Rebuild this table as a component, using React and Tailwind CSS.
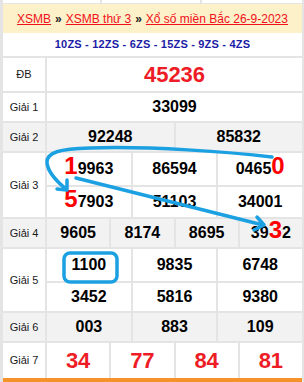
import clsx from 'clsx';

// red oversized digit used inside the Giải 3 / Giải 4 numbers
function Big({ children }) {
  return <span className="text-[24px] leading-[0] text-[#ff0000]">{children}</span>;
}

function Label({ children }) {
  return (
    <div className="w-[44px] shrink-0 flex items-center justify-center border-r-2 border-[#e4e4e4] text-[11px] text-[#1a1a1a]">
      {children}
    </div>
  );
}

function Cells({ items, className, red }) {
  return (
    <div className={clsx('flex flex-1 divide-x-2 divide-[#e4e4e4]', className)}>
      {items.map((n, i) => (
        <div
          key={i}
          className={clsx(
            'flex-1 flex items-center justify-center font-bold leading-none',
            red ? 'text-[22px] text-[#ee1c25]' : 'text-[16px] text-black'
          )}
        >
          {n}
        </div>
      ))}
    </div>
  );
}

function Row({ label, gray, className, children }) {
  return (
    <div className={clsx('flex border-b-2 border-[#e4e4e4]', gray ? 'bg-[#f2f2f2]' : 'bg-white', className)}>
      <Label>{label}</Label>
      <div className="flex-1 flex flex-col">{children}</div>
    </div>
  );
}

export default function App() {
  return (
    <div className="relative w-[304px] h-[382px] overflow-hidden font-['Liberation_Sans',Arial,sans-serif]">
      <div className="w-full h-full bg-white border-l-[3px] border-r-2 border-[#e4e4e4] flex flex-col">
        {/* tail of the table above */}
        <div className="flex h-[4px] border-b border-[#e4e4e4]">
          <div className="w-[99px] border-r-2 border-[#e4e4e4]" />
          <div className="w-[100px] border-r-2 border-[#e4e4e4]" />
          <div className="flex-1" />
        </div>

        <div className="h-[29px] bg-[#fdf1c9] flex items-center justify-center text-[12px] text-[#f0101a] whitespace-nowrap">
          <span className="underline">XSMB</span>
          <span className="mx-[4px] font-bold text-[#222]">»</span>
          <span className="underline">XSMB thứ 3</span>
          <span className="mx-[4px] font-bold text-[#222]">»</span>
          <span className="underline">Xổ số miền Bắc 26-9-2023</span>
        </div>

        <div className="h-[25px] border-b-2 border-[#e4e4e4] flex items-center justify-center text-[11px] font-bold text-[#1c1ca6] tracking-[0.2px]">
          10ZS - 12ZS - 6ZS - 15ZS - 9ZS - 4ZS
        </div>

        <Row label="ĐB" className="h-[35px]">
          <Cells items={['45236']} red />
        </Row>
        <Row label="Giải 1" className="h-[30px]">
          <Cells items={['33099']} />
        </Row>
        <Row label="Giải 2" gray className="h-[30px]">
          <Cells items={['92248', '85832']} />
        </Row>
        <Row label="Giải 3" className="h-[66px]">
          <Cells
            className="h-[34px] flex-none border-b-2 border-[#e4e4e4]"
            items={[
              <span key="a"><Big>1</Big>9963</span>,
              '86594',
              <span key="c">0465<Big>0</Big></span>,
            ]}
          />
          <Cells items={[<span key="a"><Big>5</Big>7903</span>, '51103', '34001']} />
        </Row>
        <Row label="Giải 4" gray className="h-[30px]">
          <Cells items={['9605', '8174', '8695', <span key="d">39<Big>3</Big>2</span>]} />
        </Row>
        <Row label="Giải 5" className="h-[64px]">
          <Cells className="h-[34px] flex-none border-b-2 border-[#e4e4e4]" items={['1100', '9835', '6748']} />
          <Cells items={['3452', '5816', '9380']} />
        </Row>
        <Row label="Giải 6" gray className="h-[30px]">
          <Cells items={['003', '883', '109']} />
        </Row>
        <div className="flex h-[39px] bg-white border-b-4 border-[#f5922a]">
          <Label>Giải 7</Label>
          <Cells items={['34', '77', '84', '81']} red />
        </div>
      </div>

      {/* hand-drawn annotations */}
      <svg
        className="absolute left-0 top-0 pointer-events-none"
        width="304"
        height="382"
        viewBox="0 0 304 382"
        fill="none"
        stroke="#1ba1e2"
        strokeWidth="3.5"
        strokeLinecap="round"
        strokeLinejoin="round"
      >
        <path d="M272 157 C230 152 150 146 90 148 C60 149 46 152 47 163 C48 172 55 180 66 189" />
        <path d="M57 189 L67 190 L67 180" />
        <path d="M76 178 L263 225" />
        <path d="M257 217 L264 225 L254 230" />
        <rect x="64" y="253" width="53" height="29" rx="6" />
      </svg>
    </div>
  );
}
